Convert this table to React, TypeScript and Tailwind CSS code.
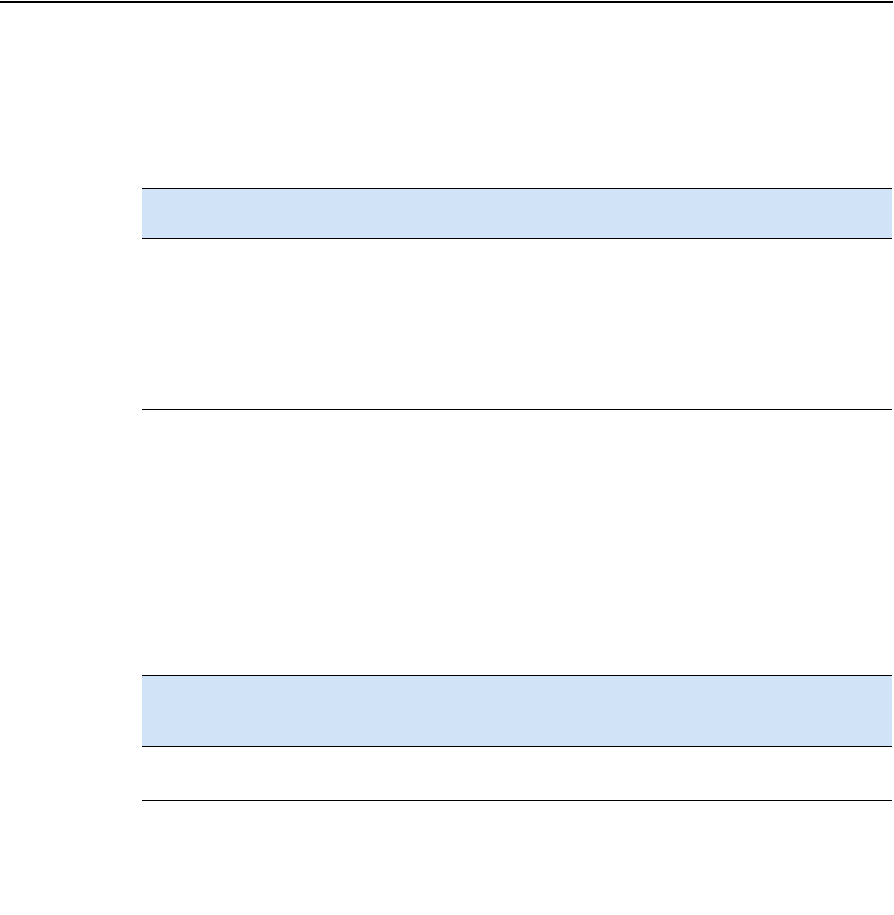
import React from "react";

const Table = ({ head, body }: { head: string; body: string }) => (
  <div className="w-[750px]">
    <div className={`bg-[#d0e3f7] border-t border-b border-black ${head}`} />
    <div className={`border-b border-black ${body}`} />
  </div>
);

export default function App() {
  return (
    <div className="w-[894px] h-[915px] bg-white font-['Liberation_Sans',sans-serif]">
      {/* Top rule */}
      <div className="pt-px">
        <div className="h-[2px] w-[893px] bg-black" />
      </div>

      <div className="pl-[142px] pt-[185px]">
        <Table head="h-[51px]" body="h-[171px]" />
        <div className="h-[265px]" />
        <Table head="h-[72px]" body="h-[54px]" />
      </div>
    </div>
  );
}
